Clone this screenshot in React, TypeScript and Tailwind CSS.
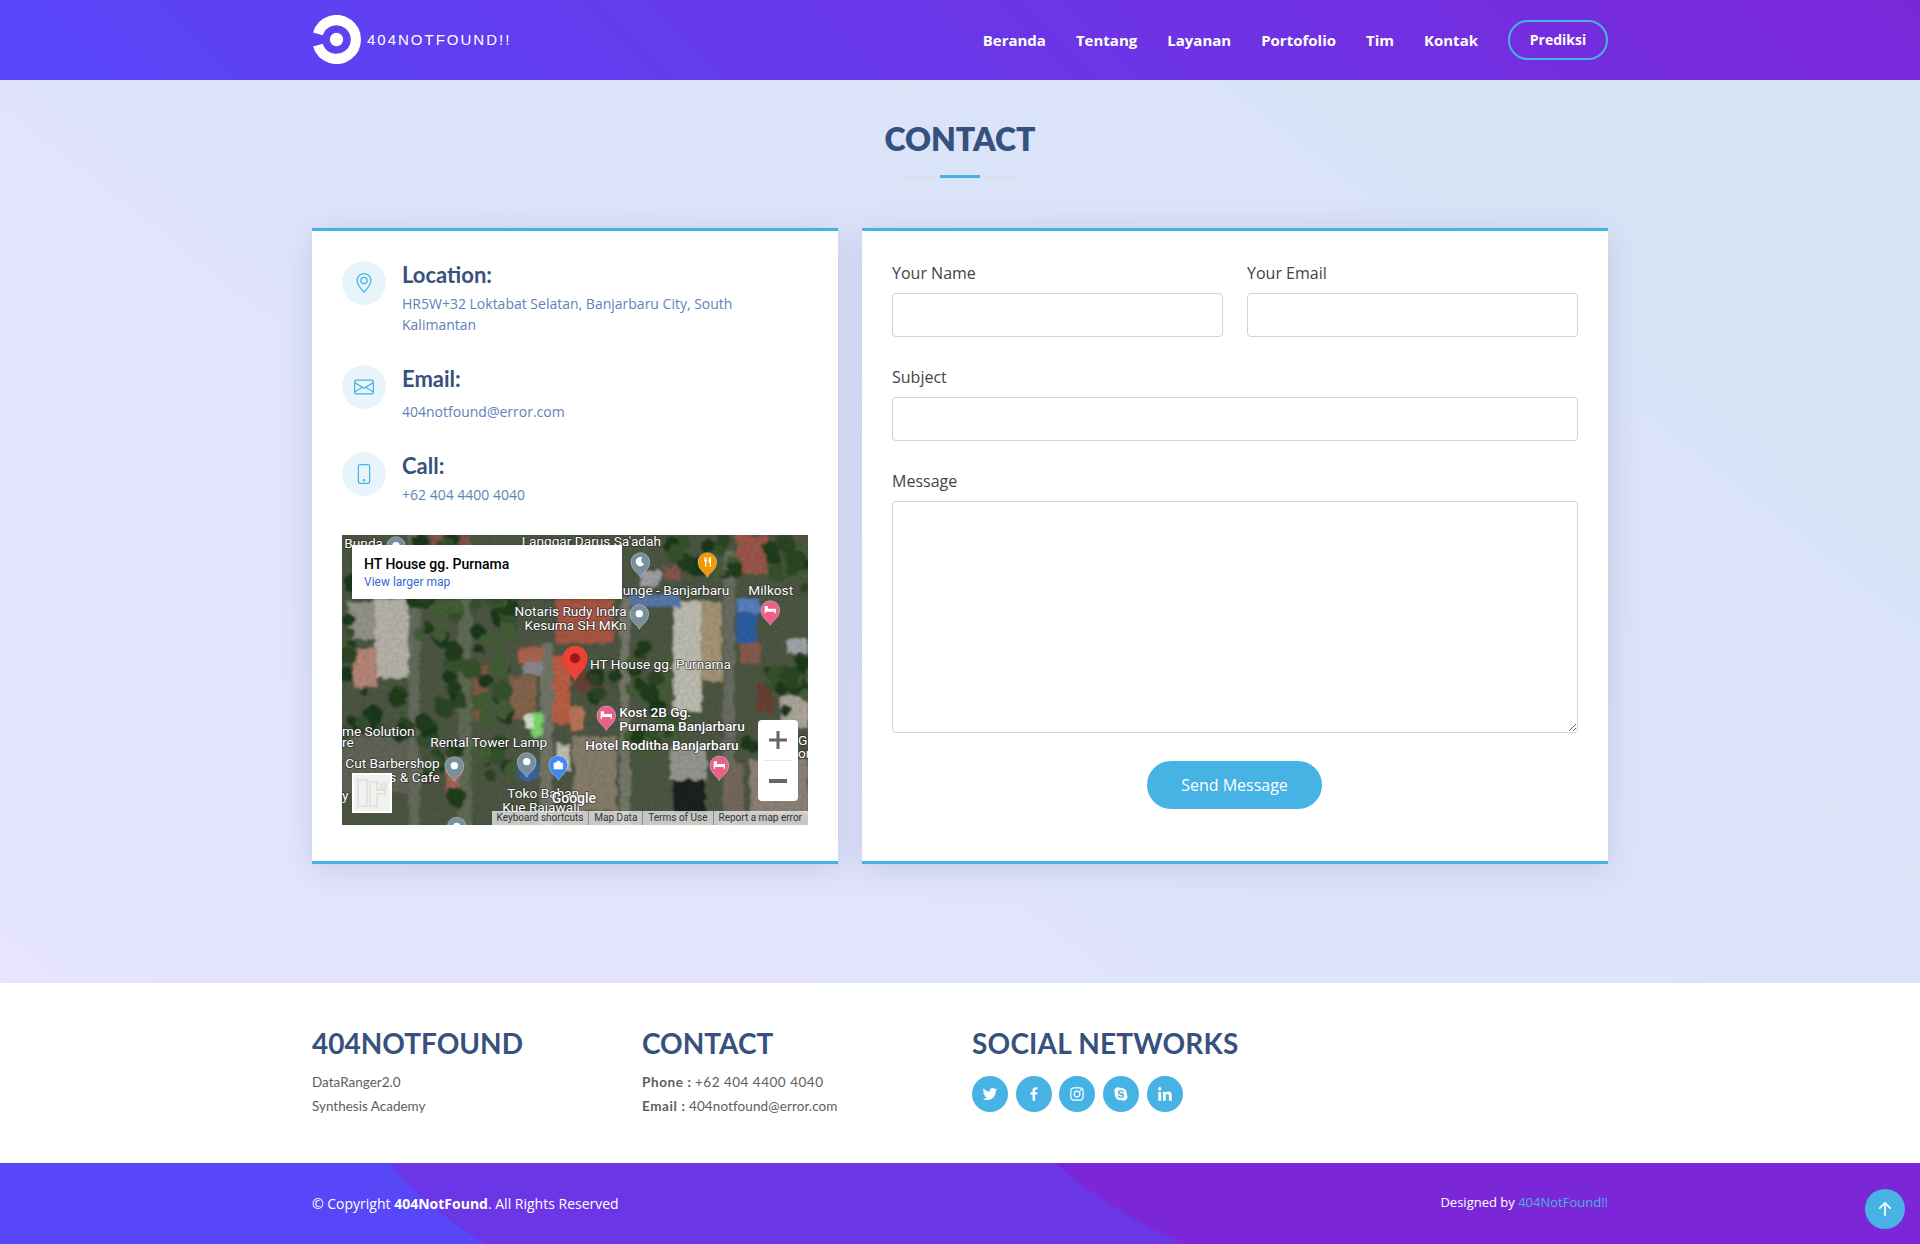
import React from "react";
import { BsGeoAlt, BsEnvelope, BsPhone, BsArrowUpShort } from "react-icons/bs";
import { BiLogoTwitter, BiLogoFacebook, BiLogoInstagram, BiLogoSkype, BiLogoLinkedin } from "react-icons/bi";

const NAV = ["Beranda", "Tentang", "Layanan", "Portofolio", "Tim", "Kontak"];

function Logo() {
  return (
    <svg width="49" height="49" viewBox="0 0 48 48" className="shrink-0">
      <path d="M5.8 18.5 A19 19 0 1 1 5.8 29.5" fill="none" stroke="#fff" strokeWidth="10" />
      <circle cx="24" cy="24" r="6.5" fill="#fff" />
    </svg>
  );
}

function Pin({ x, y, color, glyph }: { x: number; y: number; color: string; glyph?: string }) {
  return (
    <g transform={`translate(${x} ${y})`}>
      <path d="M0 46 C-4 34 -28 24 -28 0 A28 28 0 0 1 28 0 C28 24 4 34 0 46Z" fill={color} stroke="#fff" strokeOpacity="0.55" strokeWidth="2" />
      {glyph === "dot" && <circle cx="0" cy="-1" r="11" fill="#fff" />}
      {glyph === "bed" && <path d="M-17 -12 v22 h4 v-5 h26 v5 h4 v-14 h-24 v-8z" fill="#fff" />}
      {glyph === "moon" && <path d="M6 -14 A14 14 0 1 0 12 6 A12 12 0 0 1 6 -14Z" fill="#fff" />}
      {glyph === "food" && <path d="M-10 -14 v12 h3 v16 h4 v-16 h3 v-12 h-2 v8 h-2 v-8 h-2 v8 h-2 v-8z M6 -14 h5 v28 h-4 v-12 h-3 v-8z" fill="#fff" />}
      {glyph === "bag" && <path d="M-13 -6 h26 v18 h-26z M-6 -6 a6 6 0 0 1 12 0" fill="#fff" stroke="#fff" strokeWidth="2" fillOpacity="1" />}
    </g>
  );
}

function Label({ x, y, children, anchor, weight }: { x: number; y: number; children: string; anchor?: "end" | "start"; weight?: number }) {
  return (
    <text
      x={x}
      y={y}
      textAnchor={anchor || "start"}
      fontFamily="Roboto, sans-serif"
      fontSize="41"
      fontWeight={weight || 400}
      fill="#fff"
      stroke="#2a2a2a"
      strokeWidth="4.5"
      strokeOpacity="0.8"
      paintOrder="stroke"
      strokeLinejoin="round"
    >
      {children}
    </text>
  );
}

// Foliage areas of the aerial photo: x0, x1, y0, y1, number of blobs
const FOLIAGE: [number, number, number, number, number][] = [
  [240, 355, 200, 840, 34],
  [395, 510, 200, 420, 16],
  [410, 500, 440, 620, 10],
  [870, 1000, 340, 650, 26],
  [1280, 1404, 370, 510, 14],
  [6, 210, 480, 620, 14],
  [6, 330, 130, 210, 12],
  [400, 640, 60, 200, 18],
  [960, 1190, 20, 140, 16],
  [1290, 1404, 30, 200, 12],
  [6, 30, 200, 470, 8],
  [240, 340, 15, 60, 4],
  [400, 520, 640, 760, 10],
  [1190, 1340, 540, 680, 8],
  [760, 830, 420, 510, 5],
];

function foliage() {
  const out: React.ReactNode[] = [];
  let seed = 17;
  const rnd = () => {
    seed = (seed * 16807) % 2147483647;
    return (seed % 10000) / 10000;
  };
  const greens = ["#24401f", "#2d4a27", "#38552f", "#1f3a1e", "#466238"];
  FOLIAGE.forEach(([x0, x1, y0, y1, n], a) => {
    for (let i = 0; i < n; i++) {
      out.push(
        <circle
          key={`${a}-${i}`}
          cx={x0 + rnd() * (x1 - x0)}
          cy={y0 + rnd() * (y1 - y0)}
          r={12 + rnd() * 20}
          fill={greens[Math.floor(rnd() * greens.length)]}
        />
      );
    }
  });
  return out;
}

function MapArt() {
  return (
    <svg viewBox="6 15 1398 870" className="absolute inset-0 w-full h-full" preserveAspectRatio="none">
      <defs>
        <filter id="sat" x="-5%" y="-5%" width="110%" height="110%">
          <feTurbulence type="fractalNoise" baseFrequency="0.035" numOctaves="3" seed="9" result="n" />
          <feDisplacementMap in="SourceGraphic" in2="n" scale="22" result="d" />
          <feGaussianBlur in="d" stdDeviation="2.5" />
        </filter>
        <filter id="grain">
          <feTurbulence type="fractalNoise" baseFrequency="0.09" numOctaves="2" seed="4" />
          <feColorMatrix values="0 0 0 0 0  0 0 0 0 0  0 0 0 0 0  0 0 0 0.6 0" />
        </filter>
      </defs>
      <g filter="url(#sat)">
        <rect x="-20" y="-20" width="1450" height="940" fill="#4f5a45" />
        <rect x="205" y="0" width="35" height="900" fill="#6a7060" />
        <rect x="355" y="180" width="40" height="720" fill="#646f58" />
        <rect x="600" y="340" width="40" height="560" fill="#777a6c" />
        <rect x="840" y="200" width="30" height="700" fill="#7c7d6f" />
        <rect x="1150" y="60" width="35" height="840" fill="#6e7165" />
        <rect x="25" y="215" width="85" height="110" fill="#9a998f" />
        <rect x="105" y="205" width="100" height="240" fill="#bdbab1" />
        <rect x="40" y="355" width="70" height="115" fill="#bd8c7c" />
        <rect x="6" y="620" width="200" height="170" fill="#66675a" />
        <rect x="320" y="650" width="40" height="170" fill="#a86c58" />
        <rect x="650" y="205" width="170" height="135" fill="#b05a45" />
        <rect x="535" y="350" width="75" height="50" fill="#b4674f" />
        <rect x="550" y="395" width="60" height="40" fill="#8f8d92" />
        <rect x="400" y="410" width="45" height="160" fill="#8b5a48" />
        <rect x="510" y="440" width="80" height="130" fill="#8a6850" />
        <rect x="640" y="380" width="50" height="200" fill="#c3624a" />
        <rect x="690" y="530" width="40" height="70" fill="#c27a5e" />
        <rect x="700" y="420" width="90" height="60" fill="#6b4538" />
        <rect x="700" y="620" width="130" height="220" fill="#8d8270" />
        <rect x="1000" y="215" width="85" height="330" fill="#c4c4b8" />
        <rect x="1085" y="215" width="60" height="240" fill="#ab9b7a" />
        <rect x="870" y="190" width="150" height="40" fill="#5b7bb0" />
        <rect x="1190" y="240" width="60" height="100" fill="#2e62a8" />
        <rect x="1190" y="210" width="70" height="35" fill="#5b85c4" />
        <rect x="1200" y="340" width="60" height="60" fill="#8b5f50" />
        <rect x="1190" y="15" width="90" height="115" fill="#a25a4e" />
        <rect x="1340" y="330" width="64" height="40" fill="#a7abad" />
        <rect x="1250" y="460" width="50" height="90" fill="#6d4234" />
        <rect x="1320" y="500" width="84" height="90" fill="#b3ada0" />
        <rect x="990" y="650" width="110" height="100" fill="#9d9d96" />
        <rect x="1000" y="750" width="95" height="100" fill="#1f2420" />
        <rect x="1150" y="700" width="60" height="150" fill="#7b6c60" />
        <rect x="1230" y="690" width="174" height="160" fill="#93877b" />
        <rect x="270" y="15" width="120" height="40" fill="#8a5848" />
        <rect x="970" y="110" width="50" height="40" fill="#8b5a50" />
        <rect x="900" y="120" width="60" height="50" fill="#a6a6a8" />
        <rect x="535" y="690" width="60" height="60" fill="#3a6ab0" />
        <rect x="650" y="640" width="40" height="80" fill="#c7c3b8" />
        {foliage()}
        <rect x="575" y="550" width="35" height="70" fill="#7fe26c" />
        <rect x="555" y="555" width="25" height="40" fill="#d9ebd0" />
      </g>
      <rect x="6" y="15" width="1398" height="870" filter="url(#grain)" opacity="0.25" />

      <Label x={545} y={47}>Langgar Darus Sa'adah</Label>
      <Label x={848} y={195}>unge - Banjarbaru</Label>
      <Label x={1225} y={195}>Milkost</Label>
      <Label x={860} y={258} anchor="end">Notaris Rudy Indra</Label>
      <Label x={860} y={300} anchor="end">Kesuma SH MKn</Label>
      <Label x={750} y={418}>HT House gg. Purnama</Label>
      <Label x={838} y={561} weight={500}>Kost 2B Gg.</Label>
      <Label x={838} y={603} weight={500}>Purnama Banjarbaru</Label>
      <Label x={736} y={660} weight={500}>Hotel Roditha Banjarbaru</Label>
      <Label x={6} y={618}>me Solution</Label>
      <Label x={6} y={652}>re</Label>
      <Label x={271} y={651}>Rental Tower Lamp</Label>
      <Label x={16} y={714}>Cut Barbershop</Label>
      <Label x={148} y={755}>s & Cafe</Label>
      <Label x={502} y={804}>Toko Bahan</Label>
      <Label x={487} y={845}>Kue Rajawali</Label>
      <Label x={13} y={55}>Bunda</Label>
      <Label x={1374} y={645}>G</Label>
      <Label x={1374} y={685}>on</Label>
      <Label x={6} y={810}>y</Label>

      <Pin x={168} y={48} color="#78909c" glyph="dot" />
      <Pin x={901} y={96} color="#78909c" glyph="moon" />
      <Pin x={1102} y={96} color="#f29900" glyph="food" />
      <Pin x={1291} y={240} color="#ec5f8a" glyph="bed" />
      <Pin x={898} y={252} color="#78909c" glyph="dot" />
      <Pin x={799} y={556} color="#ec5f8a" glyph="bed" />
      <Pin x={1138} y={706} color="#ec5f8a" glyph="bed" />
      <Pin x={343} y={708} color="#78909c" glyph="dot" />
      <Pin x={560} y={696} color="#78909c" glyph="dot" />
      <Pin x={655} y={705} color="#4285f4" glyph="bag" />
      <Pin x={350} y={890} color="#78909c" glyph="dot" />
      <g transform="translate(705 385)">
        <path d="M0 70 C-6 48 -38 34 -38 0 A38 38 0 0 1 38 0 C38 34 6 48 0 70Z" fill="#ea4335" />
        <circle cx="0" cy="0" r="15" fill="#a31512" />
      </g>
      <text x={635} y={818} fontFamily="Roboto, sans-serif" fontSize="42" fontWeight="500" fill="#fff" stroke="#333" strokeWidth="5" strokeOpacity="0.7" paintOrder="stroke">Google</text>
    </svg>
  );
}

function MapBlock() {
  return (
    <div className="relative mt-[30px] h-[290px] w-[466px] overflow-hidden bg-[#5a6250] font-['Roboto']">
      <MapArt />
      <div className="absolute left-[10px] top-[10px] flex h-[54px] w-[270px] flex-col justify-center bg-white pl-[12px] shadow-sm">
        <div className="text-[14px] font-medium leading-[19px] text-black">HT House gg. Purnama</div>
        <div className="text-[12px] leading-[16px] text-[#3367d6]">View larger map</div>
      </div>
      <div className="absolute left-[416px] top-[185px] flex h-[81px] w-[40px] flex-col items-center rounded-sm bg-white">
        <div className="flex h-[40px] w-full items-center justify-center">
          <svg width="18" height="18" viewBox="0 0 18 18"><path d="M7.5 0h3v7.5H18v3h-7.5V18h-3v-7.5H0v-3h7.5z" fill="#666" /></svg>
        </div>
        <div className="h-px w-[30px] bg-[#e6e6e6]" />
        <div className="flex h-[40px] w-full items-center justify-center">
          <svg width="18" height="4" viewBox="0 0 18 4"><rect width="18" height="4" fill="#666" /></svg>
        </div>
      </div>
      <div className="absolute left-[10px] top-[238px] flex h-[40px] w-[40px] items-center justify-center border-2 border-white bg-[#f1f1ef]">
        <svg width="34" height="34" viewBox="0 0 34 34"><path d="M3 4h9v26H3zM15 6h7v8h8v4h-8v12h-7zM26 8h5v4h-5z" fill="none" stroke="#dcdcd8" strokeWidth="1.5" /></svg>
      </div>
      <div className="absolute bottom-0 right-0 flex h-[14px] items-center gap-[5px] bg-[#ffffffb0] pl-[5px] pr-[6px] text-[10px] leading-[14px] text-[#333]">
        <span>Keyboard shortcuts</span>
        <span className="h-full w-px bg-[#8a8a8a]" />
        <span>Map Data</span>
        <span className="h-full w-px bg-[#8a8a8a]" />
        <span>Terms of Use</span>
        <span className="h-full w-px bg-[#8a8a8a]" />
        <span>Report a map error</span>
      </div>
    </div>
  );
}

function InfoRow({ icon, title, children, gap, textCls }: { icon: React.ReactNode; title: string; children: React.ReactNode; gap: string; textCls?: string }) {
  return (
    <div className={`flex ${gap}`}>
      <div className="flex h-[44px] w-[44px] shrink-0 items-center justify-center rounded-full bg-[#e7f5fb] text-[20px] text-[#47b2e4]">{icon}</div>
      <div className="pl-[16px] pt-[1px]">
        <h4 className="font-['Lato'] text-[22px] font-bold leading-[26px] text-[#37517e]">{title}</h4>
        <div className={`text-[14px] leading-[21px] text-[#6182ba] ${textCls || "mt-[5px]"}`}>{children}</div>
      </div>
    </div>
  );
}

function Field({ label, area }: { label: string; area?: boolean }) {
  return (
    <label className="block">
      <span className="mb-[8px] block text-[16px] leading-[24px] text-[#444444]">{label}</span>
      {area ? (
        <textarea className="block h-[232px] w-full rounded-[4px] border border-[#ced4da] bg-white" />
      ) : (
        <input className="block h-[44px] w-full rounded-[4px] border border-[#ced4da] bg-white" />
      )}
    </label>
  );
}

export default function App() {
  const socials = [BiLogoTwitter, BiLogoFacebook, BiLogoInstagram, BiLogoSkype, BiLogoLinkedin];
  return (
    <div className="relative flex h-[1244px] flex-col overflow-hidden font-['Open_Sans'] text-[#444444]">
      <header className="h-[80px] shrink-0 bg-[linear-gradient(45deg,#5846f9_0%,#7b27d8_100%)]">
        <div className="mx-auto flex h-full w-[1296px] items-center justify-between">
          <div className="flex items-center gap-[6px] pb-[1px]">
            <Logo />
            <span className="font-['Liberation_Sans'] text-[15px] leading-none tracking-[2px] text-white">404NOTFOUND!!</span>
          </div>
          <nav className="flex items-center gap-[30px] text-[15px] font-bold text-white">
            {NAV.map((n) => (
              <a key={n}>{n}</a>
            ))}
            <a className="-mt-[1px] flex h-[40px] w-[100px] items-center justify-center rounded-full border-2 border-[#47b2e4] text-[14px]">Prediksi</a>
          </nav>
        </div>
      </header>

      <main className="h-[903px] shrink-0 bg-[linear-gradient(38deg,#e6e4fe_0%,#d6e3f5_100%)]">
        <div className="flex flex-col items-center pt-[37px]">
          <h2 className="font-['Lato'] text-[32px] font-extrabold leading-[44px] text-[#37517e]">CONTACT</h2>
          <div className="relative mt-[15px] h-px w-[120px] bg-[#dddddd]">
            <div className="absolute left-[40px] top-[-1px] h-[3px] w-[40px] bg-[#47b2e4]" />
          </div>
        </div>
        <div className="mx-auto mt-[51px] flex h-[636px] w-[1296px] gap-[24px]">
          <section className="h-full w-[526px] border-y-[3px] border-[#47b2e4] bg-white px-[30px] pt-[30px] shadow-[0_5px_30px_rgba(90,100,160,0.2)]">
            <InfoRow icon={<BsGeoAlt />} title="Location:" gap="pb-[30px]">
              HR5W+32 Loktabat Selatan, Banjarbaru City, South Kalimantan
            </InfoRow>
            <InfoRow icon={<BsEnvelope />} title="Email:" gap="pb-[30px]" textCls="mt-[9px]">
              404notfound@error.com
            </InfoRow>
            <InfoRow icon={<BsPhone />} title="Call:" gap="">
              +62 404 4400 4040
            </InfoRow>
            <MapBlock />
          </section>

          <section className="flex h-full w-[746px] flex-col border-y-[3px] border-[#47b2e4] bg-white px-[30px] pt-[30px] shadow-[0_5px_30px_rgba(90,100,160,0.2)]">
            <div className="grid grid-cols-2 gap-[24px]">
              <Field label="Your Name" />
              <Field label="Your Email" />
            </div>
            <div className="mt-[28px]">
              <Field label="Subject" />
            </div>
            <div className="mt-[28px]">
              <Field label="Message" area />
            </div>
            <button className="ml-[255px] mt-[28px] h-[48px] w-[175px] rounded-full bg-[#47b2e4] text-[16px] text-white">Send Message</button>
          </section>
        </div>
      </main>

      <section className="h-[180px] shrink-0 bg-white">
        <div className="mx-auto grid w-[1296px] grid-cols-[330px_330px_1fr] pt-[43px]">
          <div>
            <h3 className="font-['Lato'] text-[28px] font-bold leading-[34px] text-[#37517e]">404NOTFOUND</h3>
            <p className="mt-[10px] font-['Lato'] text-[13.5px] leading-[24px] text-[#5e5e5e]">
              DataRanger2.0
              <br />
              Synthesis Academy
            </p>
          </div>
          <div>
            <h3 className="font-['Lato'] text-[28px] font-bold leading-[34px] text-[#37517e]">CONTACT</h3>
            <p className="mt-[10px] font-['Lato'] text-[13.5px] leading-[24px] text-[#5e5e5e]">
              <strong className="font-bold tracking-[0.6px]">Phone :</strong> <span className="tracking-[0.5px]">+62 404 4400 4040</span>
              <br />
              <strong className="font-bold tracking-[0.6px]">Email :</strong> <span className="tracking-[0.1px]">404notfound@error.com</span>
            </p>
          </div>
          <div>
            <h3 className="font-['Lato'] text-[28px] font-bold leading-[34px] tracking-[0.2px] text-[#37517e]">SOCIAL NETWORKS</h3>
            <div className="mt-[16px] flex gap-[7.7px]">
              {socials.map((Icon, i) => (
                <a key={i} className="flex h-[36px] w-[36px] items-center justify-center rounded-full bg-[#47b2e4] text-[18px] text-white">
                  <Icon />
                </a>
              ))}
            </div>
          </div>
        </div>
      </section>

      <footer className="relative h-[81px] shrink-0 bg-[#6b36e6]">
        <svg className="absolute inset-0 h-full w-full" viewBox="0 0 1920 81" preserveAspectRatio="none">
          <path d="M0 0 H389 Q430 50 487 81 H0Z" fill="#5846f9" />
          <path d="M1055 0 Q1105 45 1184 81 H1920 V0Z" fill="#7b27d8" />
        </svg>
        <div className="relative mx-auto flex h-full w-[1296px] items-center justify-between text-white">
          <div className="text-[14px]">
            © Copyright <strong className="font-bold">404NotFound</strong>. All Rights Reserved
          </div>
          <div className="-mt-[2px] text-[13px]">
            Designed by <a className="text-[#47b2e4]">404NotFound!!</a>
          </div>
        </div>
        <a className="absolute left-[1865px] top-[26px] flex h-[40px] w-[40px] items-center justify-center rounded-full bg-[#47b2e4] text-[28px] text-white">
          <BsArrowUpShort />
        </a>
      </footer>
    </div>
  );
}
